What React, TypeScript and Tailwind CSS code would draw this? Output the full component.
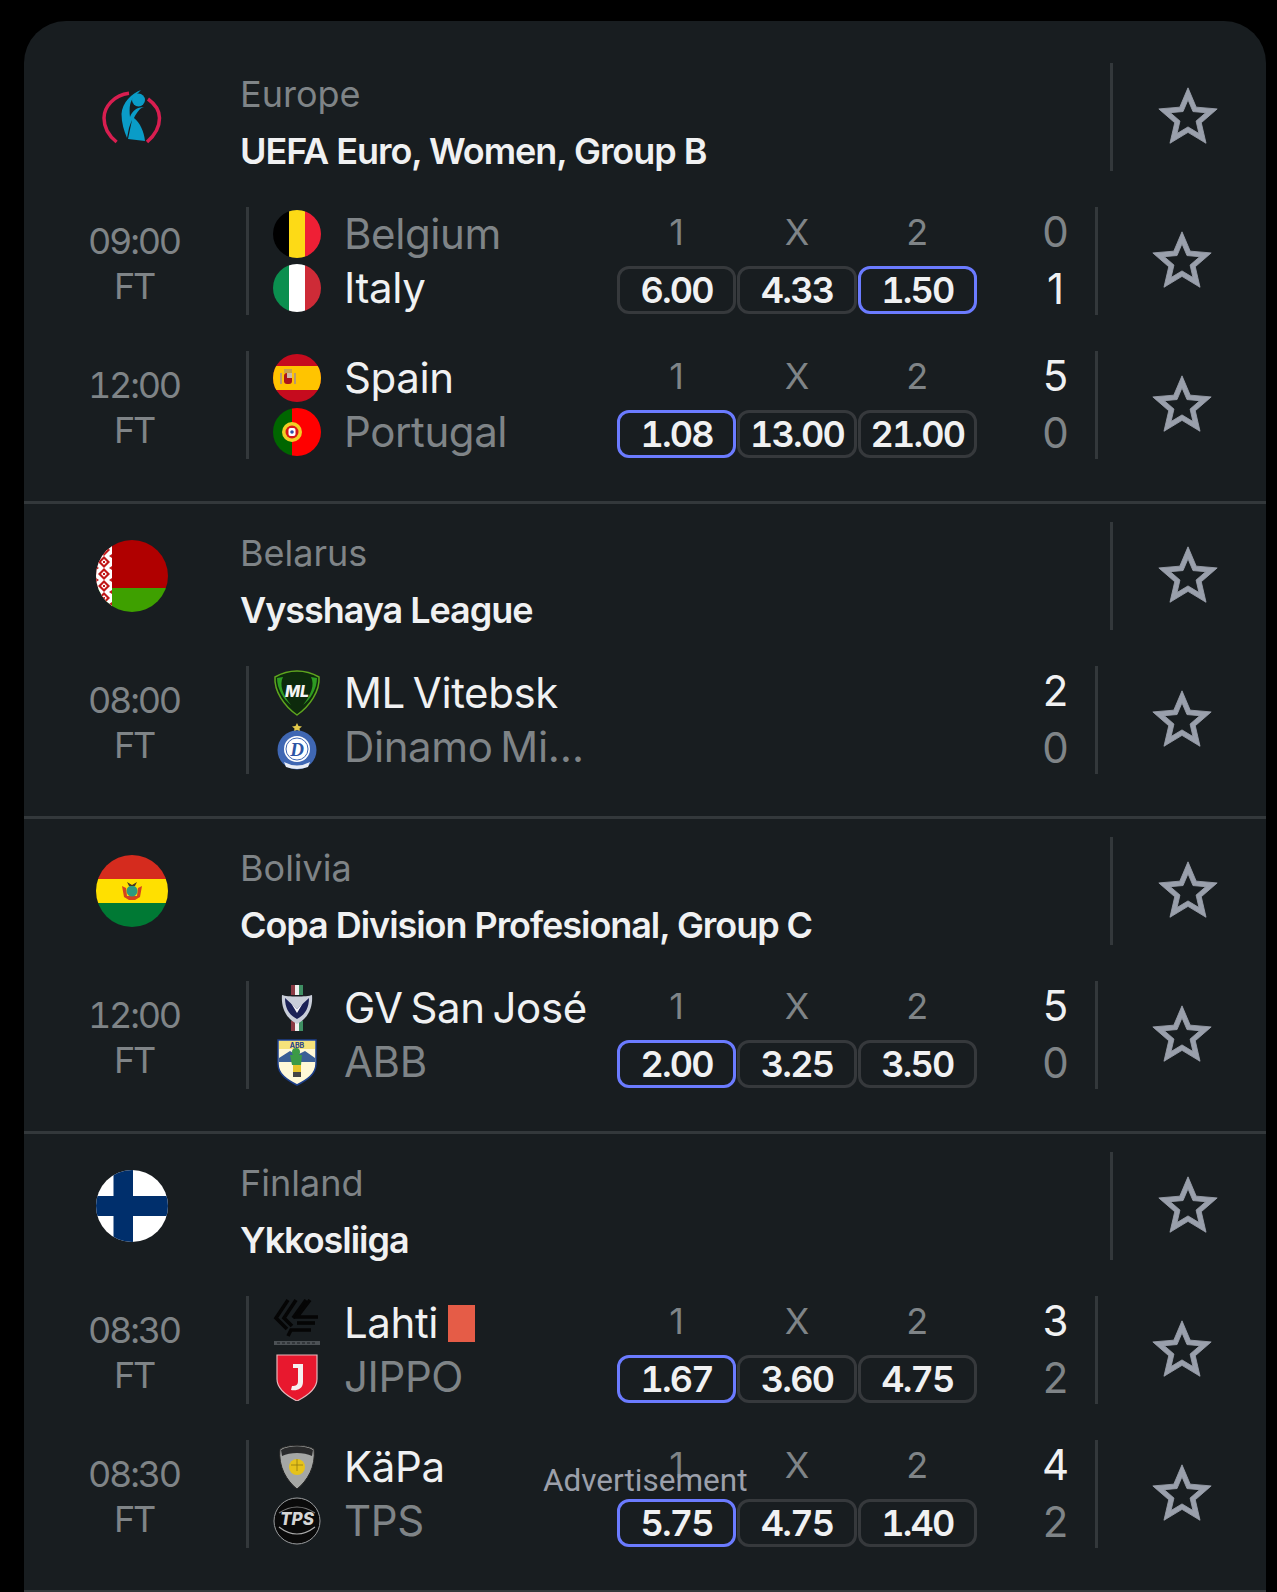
import React from 'react';

const Star = ({ className }: { className?: string }) => (
    <svg viewBox="0 0 24 24" className={className} fill="#9aa0ac" stroke="#9aa0ac" strokeWidth="0.3">
        <path d="M22 9.24l-7.19-.62L12 2 9.19 8.63 2 9.24l5.46 4.73L5.82 21 12 17.27 18.18 21l-1.63-7.03L22 9.24zM12 15.4l-3.76 2.27 1-4.28-3.32-2.88 4.38-.38L12 6.1l1.71 4.04 4.38.38-3.32 2.88 1 4.28L12 15.4z" />
    </svg>
);

/* League logos, 72px */
const UefaLogo = () => (
    <svg viewBox="0 0 72 72" className="w-[72px] h-[72px]">
        <path d="M33 12.3 C18 14 8 26 8 37 C8 47 13 55 20.6 61" fill="none" stroke="#d81e50" strokeWidth="3.5" />
        <path d="M52 18 C59 23 63.5 30 63.5 37 C63.5 47 58 55 51 61" fill="none" stroke="#d81e50" strokeWidth="3.5" />
        <circle cx="42.5" cy="19" r="6.5" fill="#0a9cc7" />
        <path d="M45 9 C36 12 26 22 25.5 33 C25.5 42 28 50 31 57 L33 47 C34 44 35 41 36 39 L32 58 L49 60 C48 50 44 42 38 37 C41 31 44 27 48 26 C41 26 36 30 34 36 C33 26 34 20 38 16 Z" fill="#0a9cc7" />
    </svg>
);

const BelarusFlag = () => (
    <svg viewBox="0 0 72 72" className="w-[72px] h-[72px] rounded-full">
        <rect width="72" height="48" fill="#b00000" />
        <rect y="48" width="72" height="24" fill="#3ea000" />
        <rect width="16" height="72" fill="#fff" />
        {[10, 22, 34, 46, 58].map((y) => (
            <g key={y}>
                <path d={`M8 ${y - 6} L14 ${y} L8 ${y + 6} L2 ${y} Z`} fill="#c01818" />
                <path d={`M8 ${y - 3} L11 ${y} L8 ${y + 3} L5 ${y} Z`} fill="#fff" />
                <rect x="7" y={y - 1} width="2" height="2" fill="#c01818" />
                <path d={`M0 ${y + 4} L3 ${y + 6} L0 ${y + 8} Z M16 ${y + 4} L13 ${y + 6} L16 ${y + 8} Z`} fill="#c01818" />
            </g>
        ))}
    </svg>
);

const BoliviaFlag = () => (
    <svg viewBox="0 0 72 72" className="w-[72px] h-[72px] rounded-full">
        <rect width="72" height="24" fill="#d52b1e" />
        <rect y="24" width="72" height="24" fill="#ffe000" />
        <rect y="48" width="72" height="24" fill="#007934" />
        <path d="M26 31 L28 42 L33 45 L39 45 L44 42 L46 31 L42 33 L41 41 L31 41 L30 33 Z" fill="#d5431e" />
        <circle cx="36" cy="36" r="5.5" fill="#2f9a7f" />
        <path d="M31 27 L36 30 L41 27 L39 31 L33 31 Z" fill="#4a3a20" />
    </svg>
);

const FinlandFlag = () => (
    <svg viewBox="0 0 72 72" className="w-[72px] h-[72px] rounded-full">
        <rect width="72" height="72" fill="#fff" />
        <rect x="17.5" width="19.5" height="72" fill="#002f6c" />
        <rect y="26" width="72" height="20" fill="#002f6c" />
    </svg>
);

/* Team logos, 48px */
const Belgium = () => (
    <svg viewBox="0 0 48 48" className="w-full h-full rounded-full">
        <rect width="16" height="48" fill="#000" />
        <rect x="16" width="16" height="48" fill="#fdda16" />
        <rect x="32" width="16" height="48" fill="#ef1f35" />
    </svg>
);

const Italy = () => (
    <svg viewBox="0 0 48 48" className="w-full h-full rounded-full">
        <rect width="16" height="48" fill="#0b8f4f" />
        <rect x="16" width="16" height="48" fill="#fff" />
        <rect x="32" width="16" height="48" fill="#ce2b37" />
    </svg>
);

const Spain = () => (
    <svg viewBox="0 0 48 48" className="w-full h-full rounded-full">
        <rect width="48" height="48" fill="#c60b1e" />
        <rect y="12" width="48" height="24" fill="#ffc400" />
        <rect x="11" y="19" width="8" height="11" rx="3" fill="#ad1519" />
        <rect x="14" y="19" width="5" height="5" fill="#c9b9a5" />
        <rect x="7" y="19" width="2" height="11" fill="#b89a70" />
        <rect x="21" y="19" width="2" height="11" fill="#b89a70" />
        <rect x="11" y="15" width="8" height="4" fill="#c8a24a" />
    </svg>
);

const Portugal = () => (
    <svg viewBox="0 0 48 48" className="w-full h-full rounded-full">
        <rect width="19" height="48" fill="#006600" />
        <rect x="19" width="29" height="48" fill="#ff0000" />
        <circle cx="19" cy="24" r="10" fill="#f2d024" />
        <circle cx="19" cy="24" r="6.5" fill="#d81818" />
        <rect x="15.5" y="20" width="7" height="8" rx="2" fill="#fff" />
        <circle cx="19" cy="24" r="1.8" fill="#2f4fa8" />
    </svg>
);

const Vitebsk = () => (
    <svg viewBox="0 0 48 48" className="w-full h-full">
        <path d="M24 2 C31 2 39 4 46 8 C47 22 37 37 24 46 C11 37 1 22 2 8 C9 4 17 2 24 2 Z" fill="#0d2a0c" stroke="#5ea51e" strokeWidth="1.5" />
        <path d="M38 8 C42 16 38 26 30 36 C37 31 44 20 44 9 Z M10 8 C6 16 10 26 18 36 C11 31 4 20 4 9 Z" fill="#2e9b22" />
        <text x="24" y="28" textAnchor="middle" fontFamily="Inter, sans-serif" fontSize="16" fontWeight="800" fontStyle="italic" fill="#f4f4f4">ML</text>
    </svg>
);

const Dinamo = () => (
    <svg viewBox="0 0 48 48" className="w-full h-full">
        <path d="M24 0 L25.5 3 L29 3.5 L26.5 5.5 L27 8.5 L24 7 L21 8.5 L21.5 5.5 L19 3.5 L22.5 3 Z" fill="#e3c94a" />
        <circle cx="24" cy="27" r="19.5" fill="#3f67b3" />
        <circle cx="24" cy="26" r="13" fill="#fff" />
        <circle cx="24" cy="26" r="11" fill="none" stroke="#3f67b3" strokeWidth="1" />
        <text x="24" y="33" textAnchor="middle" fontFamily="Liberation Serif, serif" fontSize="19" fontWeight="700" fontStyle="italic" fill="#2d55a5">D</text>
        <path d="M11 39 Q24 46 37 39 L35 44 Q24 48 13 44 Z" fill="#e8ecf5" />
    </svg>
);

const SanJose = () => (
    <svg viewBox="0 0 48 48" className="w-full h-full">
        <rect x="18" y="1" width="4" height="10" fill="#8a3a44" />
        <rect x="22" y="1" width="4" height="10" fill="#f0f0f0" />
        <rect x="26" y="1" width="4" height="10" fill="#3f8f63" />
        <rect x="18" y="37" width="4" height="10" fill="#8a3a44" />
        <rect x="22" y="37" width="4" height="10" fill="#f0f0f0" />
        <rect x="26" y="37" width="4" height="10" fill="#3f8f63" />
        <path d="M9 11 C14 13 34 13 39 11 C40 22 36 34 24 40 C12 34 8 22 9 11 Z" fill="#c9ced9" />
        <path d="M12 14 L24 25 L36 14 C36 24 32 31 24 35 C16 31 12 24 12 14 Z" fill="#1b2156" />
        <path d="M18 19 L24 25 L30 19 L24 29 Z" fill="#f4f4f8" />
    </svg>
);

const Abb = () => (
    <svg viewBox="0 0 48 48" className="w-full h-full">
        <path d="M5 2 L43 2 L43 26 C43 36 34 42 24 47 C14 42 5 36 5 26 Z" fill="#fff8d8" stroke="#1d3f8a" strokeWidth="1.5" />
        <rect x="6" y="3" width="36" height="8" fill="#f6e27a" />
        <text x="24" y="10" textAnchor="middle" fontFamily="Inter, sans-serif" fontSize="7" fontWeight="700" fill="#1d3f8a">ABB</text>
        <path d="M6 20 L17 13 L24 17 L32 13 L42 20 L42 24 L6 24 Z" fill="#3b5f96" />
        <circle cx="23" cy="14" r="4" fill="#3c9a46" />
        <path d="M17 17 L29 17 L28 27 L19 27 Z" fill="#3c9a46" />
        <rect x="20" y="27" width="8" height="7" fill="#e6c32a" />
        <rect x="20" y="34" width="8" height="5" fill="#444" />
    </svg>
);

const Lahti = () => (
    <svg viewBox="0 0 48 48" className="w-full h-full">
        <g fill="none" stroke="#050505" strokeWidth="3.6">
            <path d="M15 1 L3 19 L14 30" />
            <path d="M23 1 L11 19 L19 27" />
            <path d="M33 1 L20 19" />
            <path d="M37 1 L24 18 L45 18" />
            <path d="M42 24 L24 24" />
            <path d="M38 31 L18 31 L15 37" />
        </g>
        <rect x="1" y="42" width="46" height="4" fill="#4c5155" />
        <path d="M4 44 H44" stroke="#181d20" strokeWidth="1.2" strokeDasharray="3 2" />
    </svg>
);

const Jippo = () => (
    <svg viewBox="0 0 48 48" className="w-full h-full">
        <path d="M4 2 L44 2 L44 26 C44 36 34 43 24 48 C14 43 4 36 4 26 Z" fill="#e8182e" stroke="#e5b8bc" strokeWidth="1.2" />
        <path d="M20 11 L30 11 L30 29 C30 36 24 38 18 37 L19 33 C23 33 25 32 25 28 L25 15 L20 15 Z" fill="#f5f0f0" />
    </svg>
);

const Kapa = () => (
    <svg viewBox="0 0 48 48" className="w-full h-full">
        <path d="M7 6 C15 1 33 1 41 6 C43 24 34 38 24 46 C14 38 5 24 7 6 Z" fill="#a5a7a5" stroke="#222" strokeWidth="1" />
        <path d="M8 7 C16 2 32 2 40 7 L39 13 C31 9 17 9 9 13 Z" fill="#2a2b2c" />
        <circle cx="24" cy="24" r="8" fill="#e6c31b" />
        <path d="M18 22 L30 22 M24 16 L24 28" stroke="#8f7a10" strokeWidth="0.8" />
    </svg>
);

const Tps = () => (
    <svg viewBox="0 0 48 48" className="w-full h-full">
        <circle cx="24" cy="24" r="23" fill="#0a0a0a" stroke="#9a9c9e" strokeWidth="1" />
        <text x="24" y="28" textAnchor="middle" fontFamily="Inter, sans-serif" fontSize="17" fontWeight="800" fontStyle="italic" fill="#d5d5d5">TPS</text>
        <path d="M6 30 Q24 44 42 30" fill="none" stroke="#aaa" strokeWidth="1.2" />
        <path d="M6 16 Q24 4 42 16" fill="none" stroke="#777" strokeWidth="1.2" />
    </svg>
);

const leagues = [
    {
        logo: <UefaLogo />,
        category: 'Europe',
        name: 'UEFA Euro, Women, Group B',
        matches: [
            { time: '09:00', home: { name: 'Belgium', logo: <Belgium />, score: '0' }, away: { name: 'Italy', logo: <Italy />, score: '1', won: true }, odds: ['6.00', '4.33', '1.50'], pick: 2 },
            { time: '12:00', home: { name: 'Spain', logo: <Spain />, score: '5', won: true }, away: { name: 'Portugal', logo: <Portugal />, score: '0' }, odds: ['1.08', '13.00', '21.00'], pick: 0 },
        ],
    },
    {
        logo: <BelarusFlag />,
        category: 'Belarus',
        name: 'Vysshaya League',
        matches: [
            { time: '08:00', home: { name: 'ML Vitebsk', logo: <Vitebsk />, score: '2', won: true }, away: { name: 'Dinamo Minsk', logo: <Dinamo />, score: '0' } },
        ],
    },
    {
        logo: <BoliviaFlag />,
        category: 'Bolivia',
        name: 'Copa Division Profesional, Group C',
        matches: [
            { time: '12:00', home: { name: 'GV San José', logo: <SanJose />, score: '5', won: true }, away: { name: 'ABB', logo: <Abb />, score: '0' }, odds: ['2.00', '3.25', '3.50'], pick: 0 },
        ],
    },
    {
        logo: <FinlandFlag />,
        category: 'Finland',
        name: 'Ykkosliiga',
        matches: [
            { time: '08:30', home: { name: 'Lahti', logo: <Lahti />, score: '3', won: true, redCard: true }, away: { name: 'JIPPO', logo: <Jippo />, score: '2' }, odds: ['1.67', '3.60', '4.75'], pick: 0 },
            { time: '08:30', home: { name: 'KäPa', logo: <Kapa />, score: '4', won: true }, away: { name: 'TPS', logo: <Tps />, score: '2' }, odds: ['5.75', '4.75', '1.40'], pick: 0 },
        ],
    },
];

function TeamRow({ team }: any) {
    return (
        <div className="flex items-center h-[48px] gap-[23px]">
            <div className="w-[48px] h-[48px] shrink-0">{team.logo}</div>
            <div className={`flex items-center min-w-0 gap-[10px] text-[42px] leading-[52px] tracking-[-0.4px] [word-spacing:-3.5px] ${team.won ? 'text-[#f0f1f2]' : 'text-[#7f8487]'}`}>
                <span className="truncate max-w-[246px]">{team.name}</span>
                {team.redCard && <span className="w-[27px] h-[37px] shrink-0 bg-[#e55c47]" />}
            </div>
        </div>
    );
}

function Odds({ odds, pick }: any) {
    return (
        <div className="w-[360px] shrink-0 grid grid-cols-3 gap-x-[1px] pt-[1px]">
            {['1', 'X', '2'].map((label) => (
                <div key={label} className="h-[48px] mb-[9px] flex items-center justify-center text-[36px] text-[#7f8487]">
                    {label}
                </div>
            ))}
            {odds.map((value: string, i: number) => (
                <div
                    key={i}
                    className={`h-[48px] flex items-center justify-center rounded-[12px] border-[3px] text-[36px] font-semibold tabular-nums tracking-[-1.8px] text-[#f0f1f2] ${i === pick ? 'border-[#6b7bff]' : 'border-[#36393c]'}`}
                >
                    {value}
                </div>
            ))}
        </div>
    );
}

function MatchRow({ match }: any) {
    return (
        <div className="flex h-[108px]">
            <div className="w-[222px] shrink-0 flex flex-col items-center justify-center pt-[6px] pr-[2px] text-[36px] leading-[45px] tabular-nums tracking-[-2.2px] text-[#7f8487]">
                <span>{match.time}</span>
                <span>FT</span>
            </div>
            <div className="w-[3px] shrink-0 bg-[#33383b]" />
            <div className="flex-1 min-w-0 flex flex-col gap-[6px] py-[3px] pl-[24px]">
                <TeamRow team={match.home} />
                <TeamRow team={match.away} />
            </div>
            {match.odds && <Odds odds={match.odds} pick={match.pick} />}
            <div className="w-[118px] shrink-0 flex flex-col items-center justify-center pb-[3px] pl-[41px] pr-[2px] text-[42px] leading-[57px]">
                <span className={match.home.won ? 'text-[#f0f1f2]' : 'text-[#7f8487]'}>{match.home.score}</span>
                <span className={match.away.won ? 'text-[#f0f1f2]' : 'text-[#7f8487]'}>{match.away.score}</span>
            </div>
            <div className="w-[3px] shrink-0 bg-[#33383b]" />
            <div className="w-[168px] shrink-0 flex items-center pl-[49px]">
                <Star className="w-[70px] h-[70px]" />
            </div>
        </div>
    );
}

function LeagueSection({ league }: any) {
    return (
        <section className="pt-[18px] pb-[42px] border-b-[3px] border-[#33383b] flex flex-col gap-[36px]">
            <div className="flex h-[108px]">
                <div className="w-[216px] shrink-0 flex items-center justify-center">{league.logo}</div>
                <div className="flex-1 flex flex-col justify-center gap-[11px] pt-[10px]">
                    <span className="text-[36px] leading-[46px] text-[#7f8487]">{league.category}</span>
                    <span className="text-[36px] leading-[46px] font-semibold tracking-[-1.05px] text-[#f0f1f2]">{league.name}</span>
                </div>
                <div className="w-[3px] shrink-0 bg-[#33383b]" />
                <div className="w-[153px] shrink-0 flex items-center pl-[40px]">
                    <Star className="w-[70px] h-[70px]" />
                </div>
            </div>
            {league.matches.map((match: any, i: number) => (
                <MatchRow key={i} match={match} />
            ))}
        </section>
    );
}

export default function App() {
    return (
        <div className="relative w-[1277px] h-[1592px] overflow-hidden bg-black pt-[21px] pl-[24px] font-['Inter',sans-serif]">
            <div className="w-[1242px] rounded-t-[42px] bg-[#181d20] pt-[24px]">
                {leagues.map((league) => (
                    <LeagueSection key={league.category} league={league} />
                ))}
            </div>
            {/* ad label floats over the last row */}
            <span className="absolute left-[543px] top-[1463px] text-[31.5px] leading-[36px] text-[#9ca0ab] font-['Roboto',sans-serif]">
                Advertisement
            </span>
        </div>
    );
}
